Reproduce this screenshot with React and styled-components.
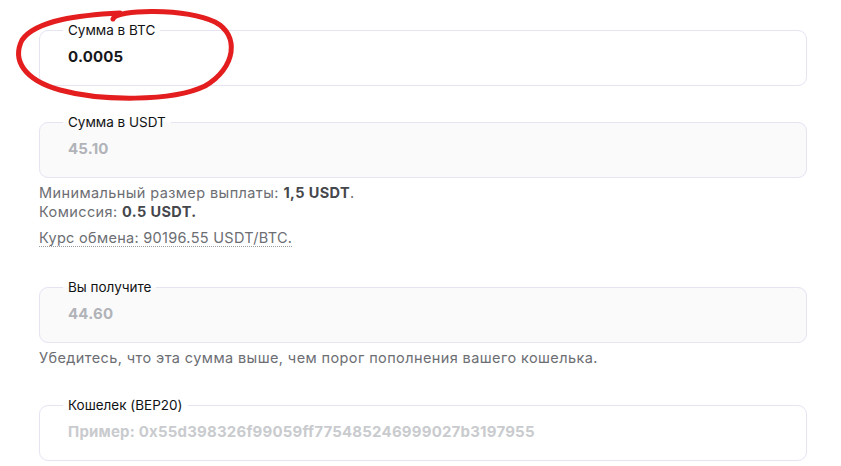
import React from 'react';
import styled, { createGlobalStyle } from 'styled-components';

const GlobalStyle = createGlobalStyle`
  body {
    margin: 0;
    background: #ffffff;
    font-family: Inter, "Noto Sans", sans-serif;
    color: #1b1c1f;
  }
`;

const Page = styled.div`
  position: relative;
  width: 841px;
  height: 466px;
  overflow: hidden;
  padding: 22px 34px 0 39px;
  box-sizing: border-box;
`;

const Form = styled.div`
  display: flex;
  flex-direction: column;
  align-items: flex-start;
  width: 768px;
`;

const Field = styled.fieldset`
  display: block;
  margin: ${p => p.$mt || 0}px 0 0;
  padding: 9px 0 0 28px;
  width: 768px;
  height: 64px;
  box-sizing: border-box;
  border: 1px solid #e6e3f3;
  border-radius: 9px;
  background: ${p => (p.$filled ? '#fafafb' : '#ffffff')};
`;

const Legend = styled.legend`
  padding: 0 5px;
  margin-left: -5px;
  font-size: 13.5px;
  line-height: 16px;
  color: #111214;
`;

const Value = styled.div`
  font-size: 15px;
  line-height: 20px;
  font-weight: 700;
  letter-spacing: 0.2px;
  color: ${p => p.$color || '#16171a'};
`;

const Note = styled.div`
  font-size: 14.5px;
  line-height: 19px;
  letter-spacing: 0.4px;
  color: #6c6e73;
  margin-top: ${p => p.$mt || 0}px;

  b {
    font-weight: 700;
    color: #45474c;
  }
`;

const Rate = styled.div`
  font-size: 14.5px;
  line-height: 17px;
  letter-spacing: 0.3px;
  color: #6c6e73;
  border-bottom: 1px dotted #9a9ca1;
  margin-top: 8px;
`;

const Scribble = styled.svg`
  position: absolute;
  left: 0;
  top: 0;
  pointer-events: none;
`;

export default function App() {
  return (
    <Page>
      <GlobalStyle />
      <Form>
        <Field>
          <Legend>Сумма в BTC</Legend>
          <Value>0.0005</Value>
        </Field>
        <Field $filled $mt={28}>
          <Legend>Сумма в USDT</Legend>
          <Value $color="#b1b3b8">45.10</Value>
        </Field>
        <Note $mt={5}>
          Минимальный размер выплаты: <b>1,5 USDT</b>.
          <br />
          Комиссия: <b>0.5 USDT.</b>
        </Note>
        <Rate>Курс обмена: 90196.55 USDT/BTC.</Rate>
        <Field $filled $mt={32}>
          <Legend>Вы получите</Legend>
          <Value $color="#b1b3b8">44.60</Value>
        </Field>
        <Note $mt={5}>
          Убедитесь, что эта сумма выше, чем порог пополнения вашего кошелька.
        </Note>
        <Field $mt={30}>
          <Legend>Кошелек (BEP20)</Legend>
          <Value $color="#c9cbce">Пример: 0x55d398326f99059ff775485246999027b3197955</Value>
        </Field>
      </Form>
      <Scribble width="841" height="466" viewBox="0 0 841 466">
        <path
          d="M 113 19 C 116 9, 185 8, 215 22 C 240 35, 236 68, 205 86 C 172 102, 100 101, 60 90 C 24 80, 12 60, 22 40 C 36 20, 80 15, 120 13"
          fill="none"
          stroke="#e41e1e"
          strokeWidth="5"
          strokeLinecap="round"
        />
      </Scribble>
    </Page>
  );
}
